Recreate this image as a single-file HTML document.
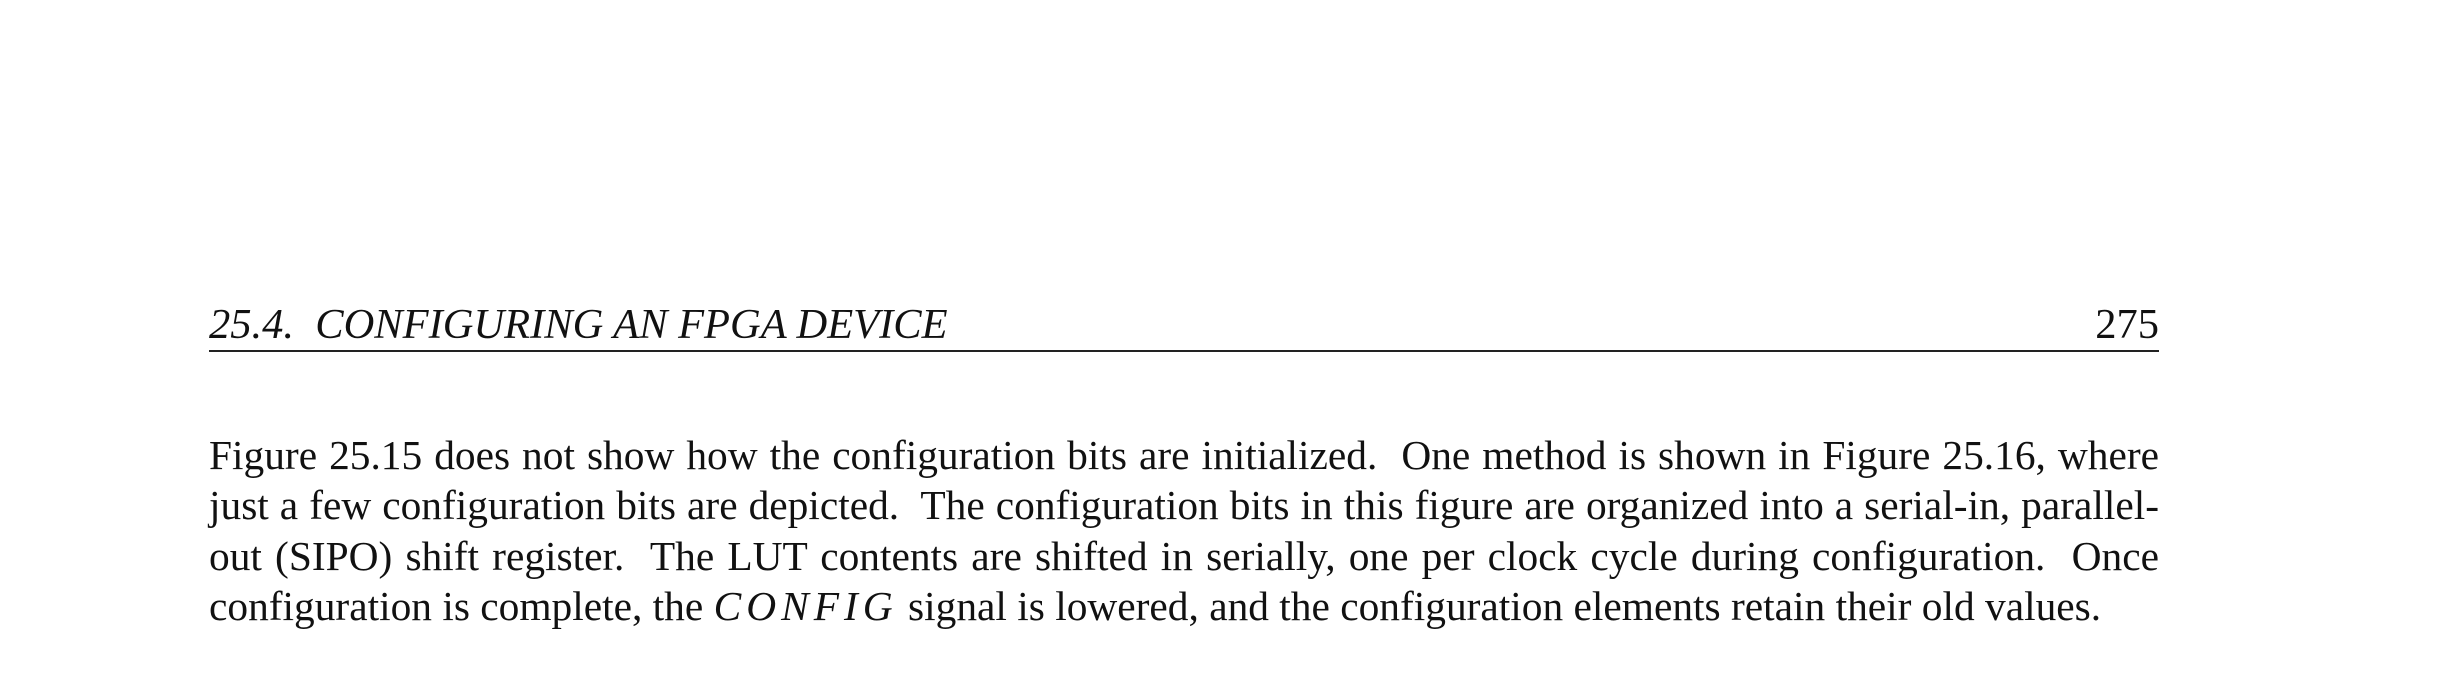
<!DOCTYPE html>
<html><head><style>
body{margin:0;width:2459px;height:685px;background:#fff;position:relative;font-family:"Liberation Serif",serif;color:#111;}
.hd{position:absolute;left:209px;top:300px;width:1950px;font-size:42.5px;font-style:italic;line-height:50px;}
.pg{position:absolute;right:0;top:0;font-style:normal;}
.rule{position:absolute;left:209px;top:350px;width:1950px;height:1.5px;background:#222;}
.ln{position:absolute;left:209px;width:1950px;font-size:41.4px;line-height:50px;text-align:justify;text-align-last:justify;white-space:nowrap;}
.ln.last{text-align-last:left;}
i.m{letter-spacing:5px;}
</style></head><body>
<div class="hd">25.4.&nbsp; CONFIGURING AN FPGA DEVICE<span class="pg">275</span></div>
<div class="rule"></div>
<div class="ln" style="top:430px">Figure 25.15 does not show how the configuration bits are initialized.&nbsp; One method is shown in Figure 25.16, where</div>
<div class="ln" style="top:480px">just a few configuration bits are depicted.&nbsp; The configuration bits in this figure are organized into a serial-in, parallel-</div>
<div class="ln" style="top:531px">out (SIPO) shift register.&nbsp; The LUT contents are shifted in serially, one per clock cycle during configuration.&nbsp; Once</div>
<div class="ln last" style="top:581px">configuration is complete, the <i class="m">CONFIG</i> signal is lowered, and the configuration elements retain their old values.</div>
</body></html>
